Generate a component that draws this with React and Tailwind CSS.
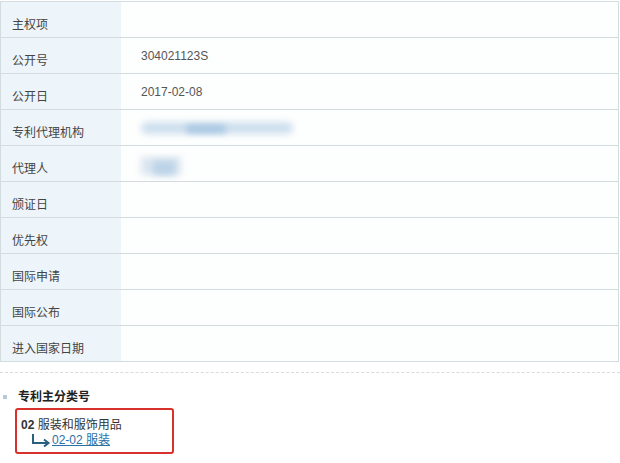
import React from "react";

const rows = [
  { label: "主权项", value: "" },
  { label: "公开号", value: "304021123S" },
  { label: "公开日", value: "2017-02-08" },
  { label: "专利代理机构", value: "blur1" },
  { label: "代理人", value: "blur2" },
  { label: "颁证日", value: "" },
  { label: "优先权", value: "" },
  { label: "国际申请", value: "" },
  { label: "国际公布", value: "" },
  { label: "进入国家日期", value: "" },
];

function Value({ v }) {
  if (v === "blur1") {
    return (
      <div className="relative h-[16px] w-[160px]">
        <div className="absolute left-0 top-[2px] h-[12px] w-[152px] rounded-full bg-[#cfe0ee] blur-[3px]" />
        <div className="absolute left-[45px] top-[5px] h-[8px] w-[40px] rounded-full bg-[#a6c6e2] blur-[3px]" />
      </div>
    );
  }
  if (v === "blur2") {
    return (
      <div className="relative h-[20px] w-[50px]">
        <div className="absolute left-0 top-[1px] h-[18px] w-[40px] bg-[#dbe6f0] blur-[3px]" />
        <div className="absolute left-[12px] top-[5px] h-[14px] w-[22px] bg-[#bcd3e8] blur-[3px]" />
      </div>
    );
  }
  return <span>{v}</span>;
}

export default function App() {
  return (
    <div
      className="w-[620px] h-[463px] bg-white text-[12px] text-[#333]"
      style={{ fontFamily: '"Liberation Sans", "Noto Sans CJK SC", sans-serif' }}
    >
      <div className="pt-px">
        <div className="w-[619px] border-t border-l border-r border-[#d3dcdf]">
          {rows.map((r, i) => (
            <div key={i} className="flex h-[36px] border-b border-[#d3dcdf]">
              <div className="w-[120px] shrink-0 bg-[#eef5fa] pl-[11px] pt-[15px] leading-[16px] text-[#444]">
                {r.label}
              </div>
              <div className="flex-1 bg-[#fdfefe] pl-[20px] pt-[10px] leading-[16px] text-[#555]">
                <Value v={r.value} />
              </div>
            </div>
          ))}
        </div>
      </div>

      <div className="mt-[10px] border-t border-dashed border-[#d6dde0]" />

      <div className="relative mt-[16px] flex items-center">
        <div className="ml-[3px] h-[4px] w-[4px] bg-[#b7c9d6]" />
        <div className="ml-[11px] font-bold text-[#222] leading-[16px]">专利主分类号</div>
      </div>

      <div className="ml-[15px] mt-[3px] h-[46px] w-[159px] rounded-[3px] border-2 border-[#d8302a] pl-[4px] pt-[8px]">
        <div className="font-bold leading-[14px] text-[#333]">
          02 <span className="font-normal">服装和服饰用品</span>
        </div>
        <div className="flex items-end leading-[14px]">
          <svg width="20" height="14" viewBox="0 0 20 14" className="ml-[10px] mt-[1px]">
            <path d="M2 1 V10 H16" fill="none" stroke="#2b5f80" strokeWidth="2" />
            <path d="M13 6.5 L17.5 10 L13 13.5" fill="none" stroke="#2b5f80" strokeWidth="2" />
          </svg>
          <a href="#" className="ml-[1px] text-[#2a6fa6] underline">02-02 服装</a>
        </div>
      </div>

      <div className="mt-[12px] border-t border-[#d3dcdf]" />
    </div>
  );
}
